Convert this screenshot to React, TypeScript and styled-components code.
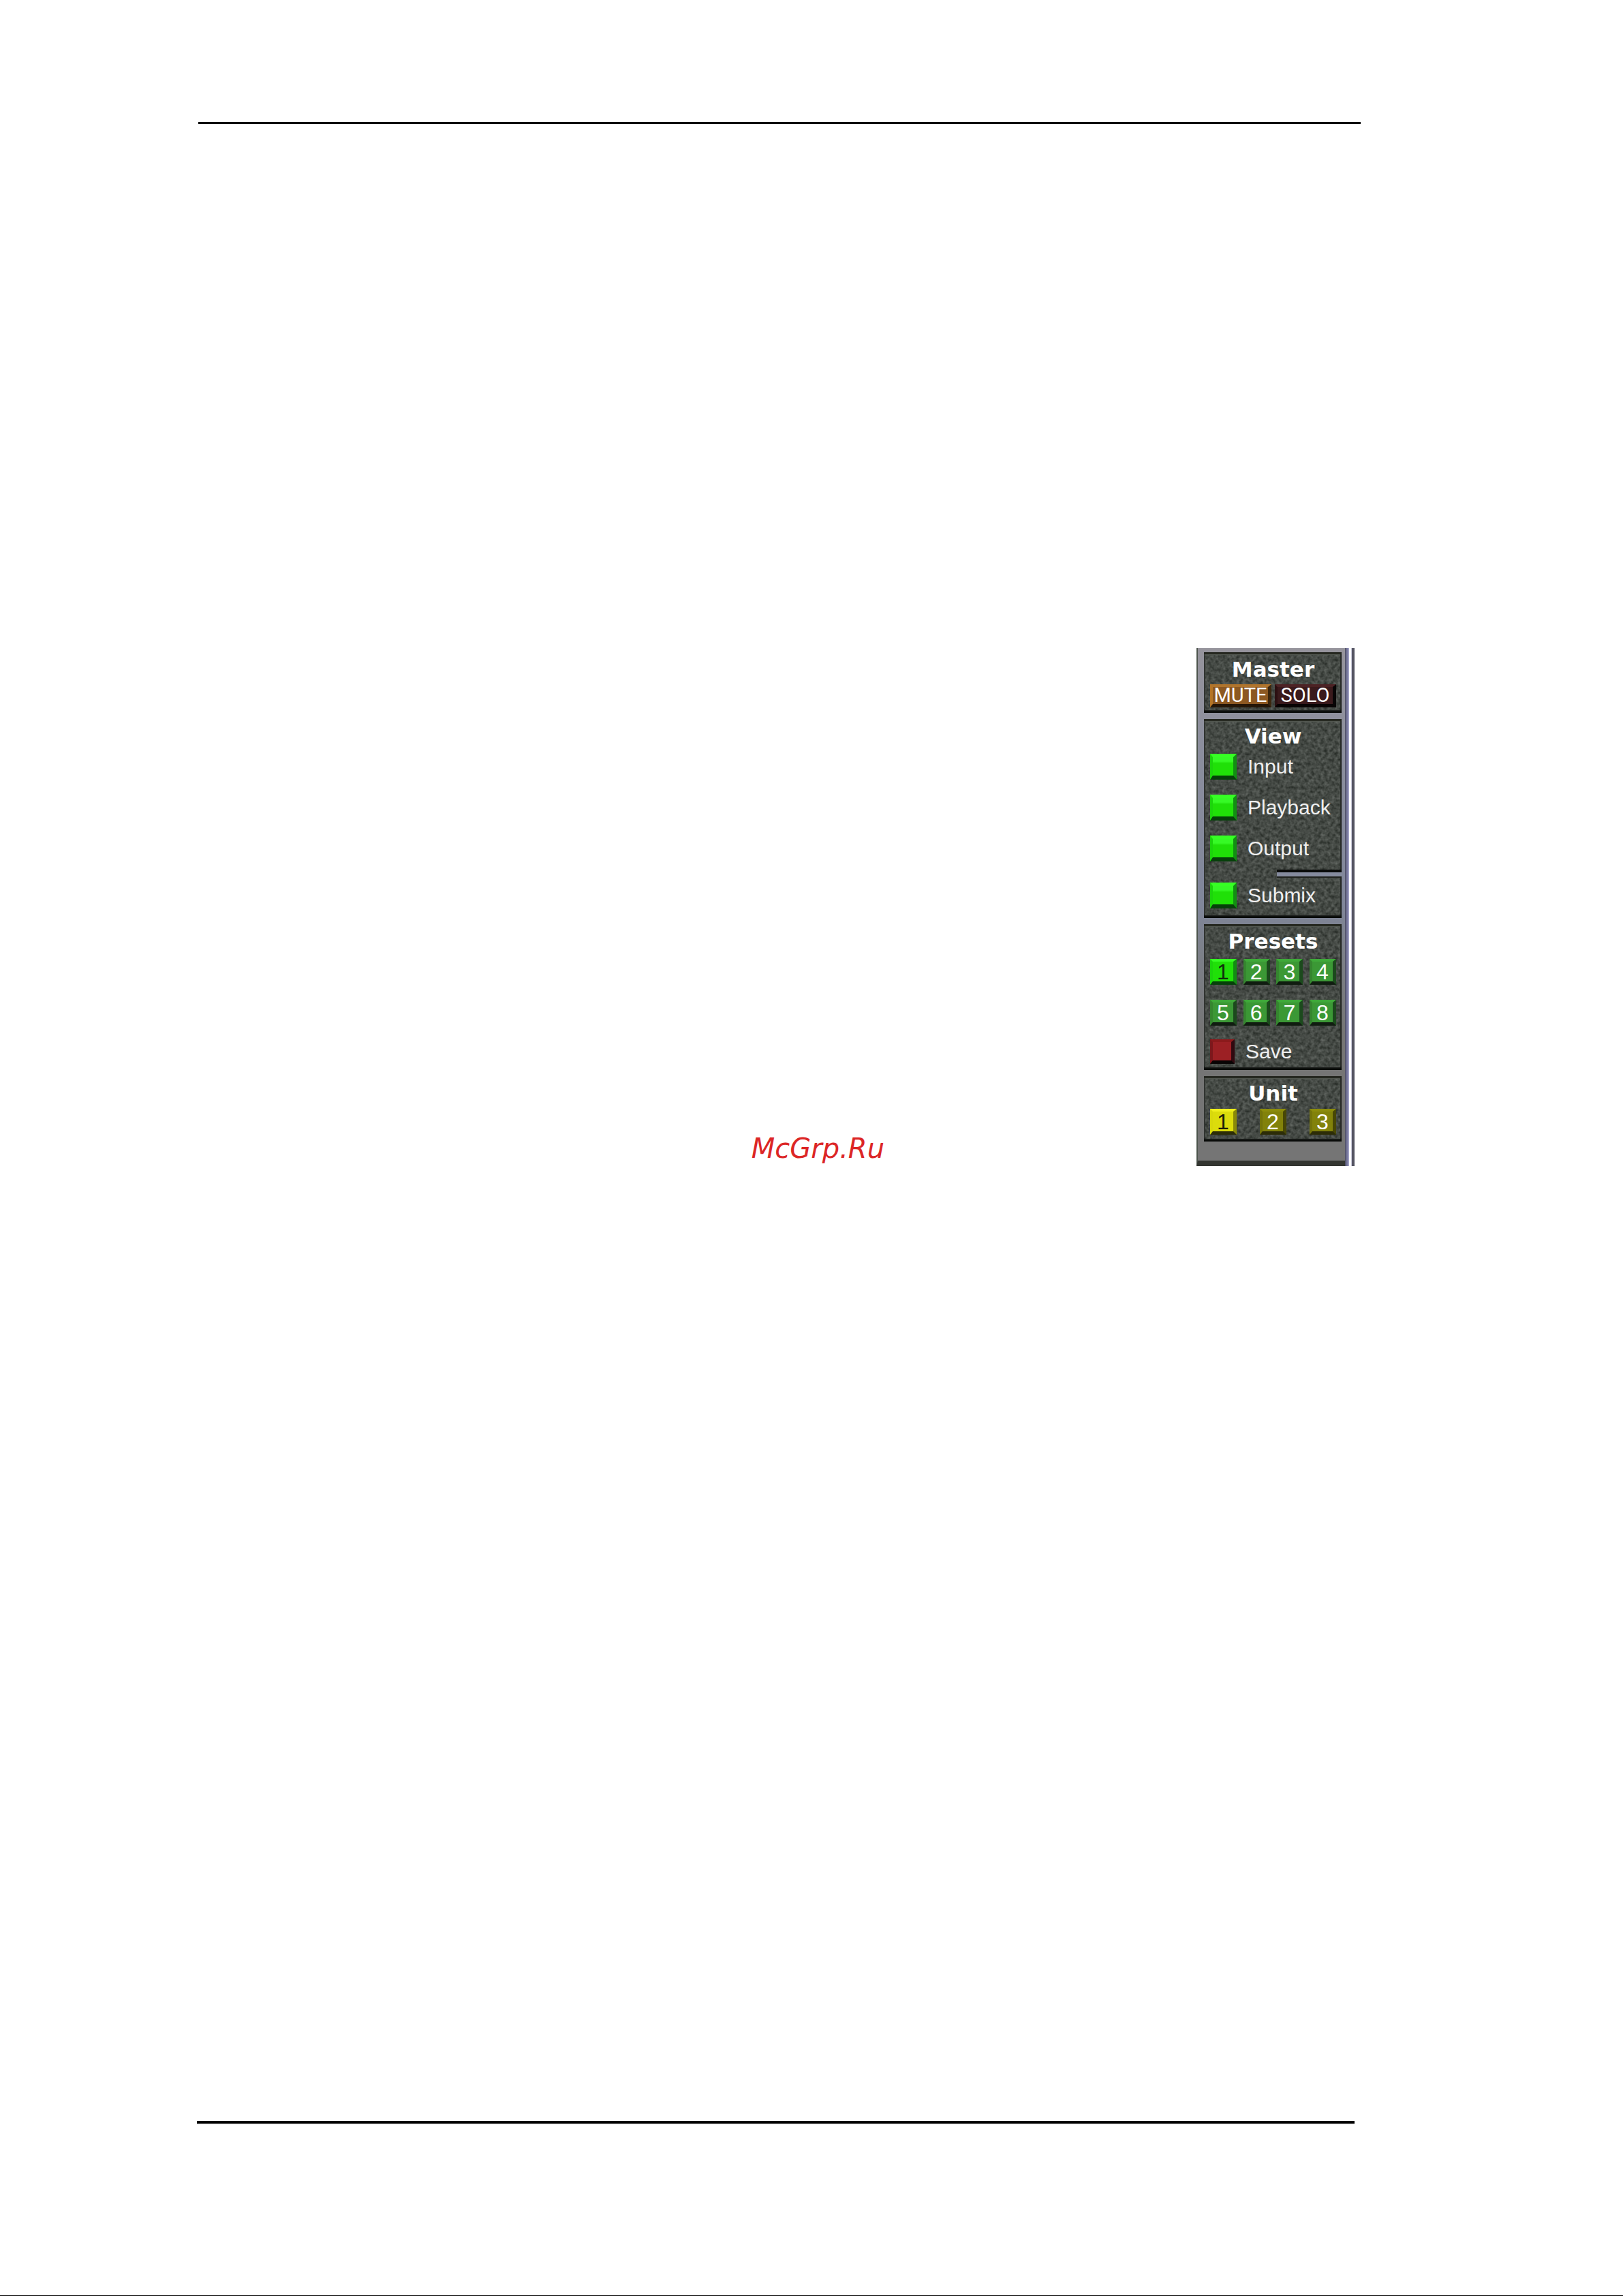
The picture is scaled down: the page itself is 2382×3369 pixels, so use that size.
import React, { useState } from "react";
import styled, { createGlobalStyle } from "styled-components";

const GlobalStyle = createGlobalStyle`
  *, *::before, *::after { box-sizing: border-box; }
  body { margin: 0; background: #fff; }
`;

const Page = styled.div`
  display: flex;
  flex-direction: column;
  min-height: 100vh;
  padding-top: 179px;
  border-bottom: 1px solid #000;
  font-family: "Liberation Sans", Arial, sans-serif;
`;

const HeaderRule = styled.hr`
  height: 3px;
  margin: 0 385px 0 291px;
  border: 0;
  background: #000;
  flex: none;
`;

const FooterRule = styled.hr`
  height: 5px;
  margin: auto 394px 251px 289px;
  border: 0;
  border-bottom: 1px solid #d0d0d0;
  background: #000;
  flex: none;
`;

const Main = styled.main`
  display: flex;
  justify-content: flex-end;
  align-items: flex-end;
  gap: 458px;
  margin: 769px 394px 0 289px;
`;

const SiteMark = styled.p`
  margin: 0;
  color: #dc2626;
  font: italic 40px/52px "DejaVu Sans", Verdana, sans-serif;
`;

const Rack = styled.aside`
  width: 232px;
  display: flex;
  background: #555563;
`;

const Body = styled.div`
  flex: 1;
  display: flex;
  flex-direction: column;
  gap: 9px;
  padding: 6px 5px 0 9px;
  border-left: 2px solid #4c544c;
  border-bottom: 8px solid #343631;
  background: linear-gradient(180deg, #96949c 0, #8b8e9d 20%, #80869a 50%, #7c8088 60%, #757575 75%, #757575 100%);
`;

const Rail = styled.div`
  width: 14px;
  background: linear-gradient(90deg,
    #55566e 0 2px, #77789c 2px 4px, #9c9cc0 4px 6px,
    #fff 6px 9px, #c8c8d8 9px 10px, #555563 10px 14px);
`;

const Panel = styled.section<{ $bottom: number }>`
  position: relative;
  padding: 7px 8px ${(p) => p.$bottom}px 9px;
  background: #454945;
  box-shadow: inset 0 3px 1px #24261f, inset 0 -4px 3px #080a08, inset -2px 0 1px #2a2d2a, inset 0 5px 1px #575c55;

  & > * { position: relative; }
`;

const GrainLayer = styled.svg`
  && {
    position: absolute;
    inset: 4px 2px;
    width: calc(100% - 4px);
    height: calc(100% - 8px);
    pointer-events: none;
  }
`;

const Title = styled.h2<{ $gap: number }>`
  margin: 0 0 ${(p) => p.$gap}px;
  color: #fff;
  font: bold 31px/36px "DejaVu Sans", Verdana, sans-serif;
  text-align: center;
`;

const Stack = styled.div`
  display: flex;
  flex-direction: column;
  gap: 22px;
`;

const Line = styled.div`
  display: flex;
  align-items: center;
  gap: 16px;
`;

const Label = styled.label`
  color: #efefef;
  font-size: 30px;
  line-height: 36px;
`;

const Divider = styled.div`
  height: 12px;
  margin: 12px -8px 7px 98px;
  border-top: 4px solid #0a0b0a;
  border-bottom: 2px solid #20221e;
  background: #858b9e;
`;

type Tone = "lit" | "green" | "yellow" | "olive" | "red" | "amber" | "maroon";

const tones: Record<Tone, { face: string; edge: string; ink: string }> = {
  lit: { face: "#20e008", edge: "#36ff24 #128f12 #06400a #1cd40c", ink: "#10300c" },
  green: { face: "#3b9835", edge: "#3fa93a #1c4a1d #101c10 #35862f", ink: "#fff" },
  yellow: { face: "#dcdc0c", edge: "#f0f01c #8a8a08 #2c2c08 #d8d80c", ink: "#1c1c08" },
  olive: { face: "#82820a", edge: "#8c8c0c #484806 #2c2c08 #74740a", ink: "#fff" },
  red: { face: "#9c2024", edge: "#8c1a1c #300a10 #080404 #7c181c", ink: "#fff" },
  amber: { face: "#8c5822", edge: "#b0742c #3c260e #241608 #b47426", ink: "#fff" },
  maroon: { face: "#3a1a1c", edge: "#4c2224 #080606 #080404 #2c1012", ink: "#fff" },
};

const Key = styled.button<{ $tone: Tone }>`
  flex: none;
  width: 39px;
  height: 38px;
  margin: 0;
  padding: 0;
  border: solid;
  border-width: 4px 5px 5px 4px;
  border-color: ${(p) => tones[p.$tone].edge};
  background: ${(p) => tones[p.$tone].face};
  color: ${(p) => tones[p.$tone].ink};
  font: 32px/28px "Liberation Sans", Arial, sans-serif;
  text-align: center;
`;

const SaveKey = styled(Key)`
  width: 36px;
  height: 36px;
`;

const WideKey = styled(Key)`
  width: 90px;
  height: 34px;
  font: 29px/25px Roboto, "Liberation Sans", sans-serif;
`;

const Check = styled.input`
  appearance: none;
  flex: none;
  width: 39px;
  height: 38px;
  margin: 0;
  border: solid;
  border-width: 5px 5px 6px 4px;
  border-color: ${tones.green.edge};
  background: ${tones.green.face};

  &:checked {
    border-color: ${tones.lit.edge};
    background: linear-gradient(180deg, #36fa26 0 6px, ${tones.lit.face} 9px);
  }
`;

const Spread = styled.div`
  display: flex;
  justify-content: space-between;
`;

const PresetGrid = styled.div`
  display: grid;
  grid-template-columns: repeat(4, auto);
  justify-content: space-between;
  row-gap: 22px;
  margin-bottom: 20px;
`;

const Foot = styled.div`
  height: 19px;
`;

function Grain() {
  return (
    <GrainLayer aria-hidden="true">
      <filter id="grain" x="0" y="0" width="100%" height="100%" colorInterpolationFilters="sRGB">
        <feTurbulence type="fractalNoise" baseFrequency="0.2" numOctaves="2" seed="7" />
        <feColorMatrix values="0.4 0 0 0 0.07  0.4 0 0 0 0.09  0.4 0 0 0 0.07  0 0 0 0 0.8" />
      </filter>
      <rect width="100%" height="100%" filter="url(#grain)" />
    </GrainLayer>
  );
}

function ViewToggle({ name }: { name: string }) {
  const [on, setOn] = useState(true);
  const id = `view-${name}`;
  return (
    <Line>
      <Check type="checkbox" id={id} checked={on} onChange={() => setOn(!on)} />
      <Label htmlFor={id}>{name}</Label>
    </Line>
  );
}

export default function App() {
  const [preset, setPreset] = useState(1);
  const [unit, setUnit] = useState(1);
  return (
    <>
      <GlobalStyle />
      <Page>
        <HeaderRule />
        <Main>
          <SiteMark>McGrp.Ru</SiteMark>
          <Rack>
            <Body>
              <Panel $bottom={8}>
                <Grain />
                <Title $gap={4}>Master</Title>
                <Spread>
                  <WideKey $tone="amber">MUTE</WideKey>
                  <WideKey $tone="maroon">SOLO</WideKey>
                </Spread>
              </Panel>
              <Panel $bottom={14}>
                <Grain />
                <Title $gap={8}>View</Title>
                <Stack>
                  {["Input", "Playback", "Output"].map((name) => (
                    <ViewToggle key={name} name={name} />
                  ))}
                </Stack>
                <Divider />
                <ViewToggle name="Submix" />
              </Panel>
              <Panel $bottom={9}>
                <Grain />
                <Title $gap={8}>Presets</Title>
                <PresetGrid>
                  {[1, 2, 3, 4, 5, 6, 7, 8].map((n) => (
                    <Key
                      key={n}
                      $tone={n === preset ? "lit" : "green"}
                      aria-pressed={n === preset}
                      onClick={() => setPreset(n)}
                    >
                      {n}
                    </Key>
                  ))}
                </PresetGrid>
                <Line>
                  <SaveKey id="save" $tone="red" />
                  <Label htmlFor="save">Save</Label>
                </Line>
              </Panel>
              <Panel $bottom={10}>
                <Grain />
                <Title $gap={5}>Unit</Title>
                <Spread>
                  {[1, 2, 3].map((n) => (
                    <Key
                      key={n}
                      $tone={n === unit ? "yellow" : "olive"}
                      aria-pressed={n === unit}
                      onClick={() => setUnit(n)}
                    >
                      {n}
                    </Key>
                  ))}
                </Spread>
              </Panel>
              <Foot />
            </Body>
            <Rail />
          </Rack>
        </Main>
        <FooterRule />
      </Page>
    </>
  );
}
